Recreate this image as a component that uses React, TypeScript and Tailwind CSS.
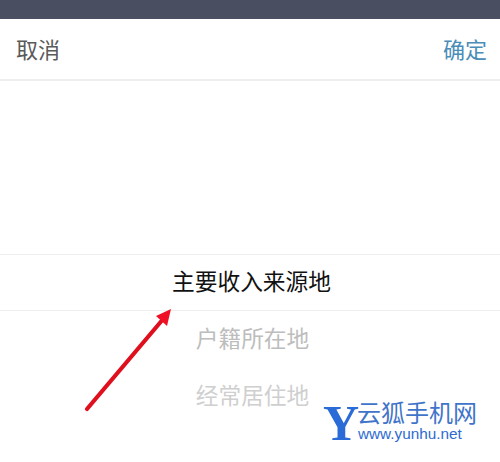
const cjk = { fontFamily: '"Noto Sans CJK SC", "Liberation Sans", sans-serif' };

const Arrow = () => (
  <svg className="absolute left-0 top-0" width="500" height="462" viewBox="0 0 500 462">
    <path d="M87 409 L164 318" stroke="#df0f1e" strokeWidth="4.2" strokeLinecap="round" fill="none" />
    <path d="M171 309 L156 316 L167 326 Z" fill="#f01025" />
  </svg>
);

const Watermark = () => (
  <div className="absolute left-[325px] top-[398px] flex items-start">
    <span
      className="text-[50px] leading-[50px] font-bold text-[#2a6bd8] w-[32px] flex justify-center"
      style={{ fontFamily: '"Liberation Serif", serif' }}
    >
      Y
    </span>
    <div className="flex flex-col">
      <span className="text-[24px] leading-[28px] text-[#3f74c9]" style={cjk}>
        云狐手机网
      </span>
      <span
        className="text-[15.3px] leading-[16px] text-[#2e6ad0] ml-[1px]"
        style={{ fontFamily: '"Liberation Sans", sans-serif' }}
      >
        www.yunhu.net
      </span>
    </div>
  </div>
);

export default function App() {
  return (
    <div className="relative w-[500px] h-[462px] bg-white overflow-hidden" style={cjk}>
      <div className="h-[19px] bg-[#494e60]" />
      <div className="h-[62px] flex items-center justify-between pl-[16px] pr-[13px] pb-[2px] border-b-2 border-[#eeeeee] text-[22px]">
        <span className="text-[#5a5a5a]">取消</span>
        <span className="text-[#4a8db8]">确定</span>
      </div>
      <div className="h-[173px]" />
      <div className="h-[57px] flex items-center justify-center pl-[3px] pb-[2px] border-y border-[#eeeeee] text-[22.7px] text-[#111111]">
        主要收入来源地
      </div>
      <div className="h-[57px] flex items-center justify-center pl-[5px] pb-[2px] text-[22.7px] text-[#bdbdbd]">户籍所在地</div>
      <div className="h-[57px] flex items-center justify-center pl-[5px] pb-[2px] text-[22.7px] text-[#cfcfcf]">经常居住地</div>
      <Arrow />
      <Watermark />
    </div>
  );
}
